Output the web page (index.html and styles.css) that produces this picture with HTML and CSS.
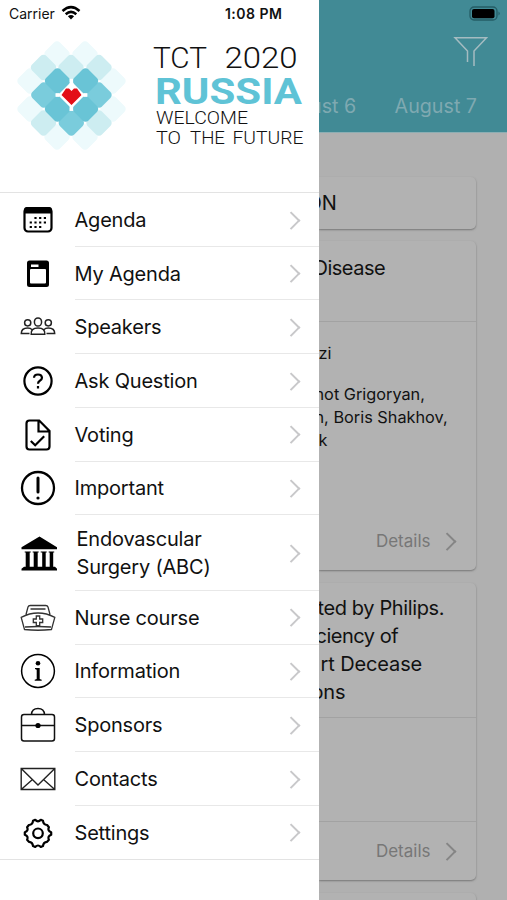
FILE: index.html
```html
<!DOCTYPE html>
<html lang="en">
<head>
<meta charset="utf-8">
<title>TCT 2020 Russia</title>
<link rel="stylesheet" href="styles.css">
</head>
<body>
<div class="app">
  <aside class="drawer">
    <div class="status"><span>Carrier</span>
      <svg class="wifi" width="20" height="16" viewBox="0 0 20 16" fill="none" stroke="#000" stroke-width="2.500"><path d="M1.500 6Q10-1.700 18.500 6M4.700 9.200Q10 4.500 15.300 9.200"/><path d="M10 14.500 6.900 11.300Q10 8.600 13.100 11.300Z" fill="#000" stroke="none"/></svg>
      <b class="clock">1:08 PM</b>
    </div>
    <svg class="logo" width="319" height="165" viewBox="0 27 319 165">
      <defs><rect id="p" x="-10.200" y="-10.200" width="20.400" height="20.400" rx="4.200" transform="rotate(45)"/></defs>
      <g fill="#edfafc"><use href="#p" x="57" y="54"/><use href="#p" x="85" y="54"/><use href="#p" x="30" y="81"/><use href="#p" x="113" y="81"/><use href="#p" x="30" y="109"/><use href="#p" x="113" y="109"/><use href="#p" x="57" y="137"/><use href="#p" x="85" y="137"/></g>
      <g fill="#cdedf1"><use href="#p" x="43.500" y="67.500"/><use href="#p" x="71" y="67.500"/><use href="#p" x="99" y="67.500"/><use href="#p" x="43.500" y="123"/><use href="#p" x="99" y="123"/></g>
      <g fill="#7accdc"><use href="#p" x="43.800" y="95"/><use href="#p" x="99" y="95"/><use href="#p" x="71.300" y="123"/></g>
      <g fill="#69c4d6"><use href="#p" x="57.500" y="81"/><use href="#p" x="85.500" y="81"/><use href="#p" x="57.500" y="109"/><use href="#p" x="85.500" y="109"/></g>
      <g fill="#fff"><rect x="69.500" y="78.800" width="3.600" height="3.600"/><rect x="55.500" y="93.200" width="3.600" height="3.600"/><rect x="83.800" y="93.200" width="3.600" height="3.600"/><rect x="69.500" y="107.300" width="3.600" height="3.600"/></g>
      <path fill="#e30f18" d="M61.500 95 66 88.500h3l2.500 2.500 2.500-2.500h3l4.500 6.500-10 10Z"/>
      <text class="l1" x="153" y="67.500" textLength="54" lengthAdjust="spacingAndGlyphs">TCT</text>
      <text class="l1" x="224.500" y="67.500" textLength="73" lengthAdjust="spacingAndGlyphs">2020</text>
      <text class="l2" x="155" y="104" textLength="147" lengthAdjust="spacingAndGlyphs">RUSSIA</text>
      <text class="l3" x="156" y="124" textLength="92" lengthAdjust="spacingAndGlyphs">WELCOME</text>
      <text class="l3" x="156" y="143.500" textLength="25" lengthAdjust="spacingAndGlyphs">TO</text>
      <text class="l3" x="190" y="143.500" textLength="35" lengthAdjust="spacingAndGlyphs">THE</text>
      <text class="l3" x="232.500" y="143.500" textLength="71" lengthAdjust="spacingAndGlyphs">FUTURE</text>
    </svg>
    <nav class="menu">
      <a class="item"><svg class="ico" viewBox="0 0 40 40"><rect x="6.500" y="8" width="27" height="23.500" rx="3.500" fill="none" stroke="#000" stroke-width="2.200"/><path d="M6 13.500V10q0-3 3-3h22q3 0 3 3v3.500Z"/><path d="M16.400 18h12M11.700 22.500h17M11.700 27h12" stroke="#000" stroke-width="2.200" stroke-dasharray="2.200 2.500"/></svg><span class="label">Agenda</span></a>
      <a class="item"><svg class="ico" viewBox="0 0 40 40"><path fill-rule="evenodd" d="M11.500 6.500h17q2.500 0 2.500 2.500v21.500q0 2.500-2.500 2.500h-17Q9 33 9 30.500V9q0-2.500 2.500-2.500Zm1.500 4V13h7.500v-2.500Zm0 4.500q-1 0-1 1v12.500q0 1 1 1h14q1 0 1-1V16q0-1-1-1Z"/></svg><span class="label">My Agenda</span></a>
      <a class="item"><svg class="ico" viewBox="0 0 40 40" fill="none" stroke="#222" stroke-width="1.500"><ellipse cx="20" cy="15" rx="3.600" ry="4.100"/><circle cx="9.700" cy="15.800" r="3.100"/><circle cx="30.300" cy="15.800" r="3.100"/><path d="M13.200 27.300q-.7-6.300 6.800-6.300t6.800 6.300ZM11.500 26.500H3.300q0-5.500 6.400-5.500 3 0 4.300 1.600M28.500 26.500h8.200q0-5.500-6.400-5.500-3 0-4.300 1.600"/></svg><span class="label">Speakers</span></a>
      <a class="item"><svg class="ico" viewBox="0 0 40 40" fill="none" stroke="#000" stroke-width="2.200"><circle cx="20" cy="20" r="13.600"/><path d="M16 16.800q.2-3.300 4-3.300t4 3.200q0 1.700-2.200 3Q20 20.700 20 22.800M20 25v2.400"/></svg><span class="label">Ask Question</span></a>
      <a class="item"><svg class="ico" viewBox="0 0 40 40" fill="none" stroke="#000" stroke-width="2.200"><path d="M11.500 5.500h9.700l10.300 10.400v15.600q0 3-3 3h-17q-3 0-3-3v-23q0-3 3-3ZM20.500 5.500v11h11M12.800 26l4.400 4.300 9-9"/></svg><span class="label">Voting</span></a>
      <a class="item"><svg class="ico" viewBox="0 0 40 40" fill="none" stroke="#000"><circle cx="20" cy="20" r="16" stroke-width="2.300"/><path d="M20 10v14" stroke-width="3" stroke-linecap="round"/><circle cx="20" cy="30" r="1.600" fill="#000" stroke="none"/></svg><span class="label">Important</span></a>
      <a class="item tall"><svg class="ico" viewBox="0 0 40 40"><path d="m21.500 3.500 17.500 10.700v2H3.500v-2ZM6.700 18.500h6v1h-1V34h-4V19.500h-1ZM14.700 18.500h6v1h-1V34h-4V19.500h-1ZM22.700 18.500h6v1h-1V34h-3.500V19.500h-1.500ZM30.700 18.500h5.500v1h-1V34h-3.500V19.500h-1ZM6 33.800h31l2 2v1.700H3.500v-1.700Z"/></svg><span class="label">Endovascular<br>Surgery (ABC)</span></a>
      <a class="item"><svg class="ico" viewBox="0 0 40 40" fill="none" stroke="#333" stroke-width="1.300"><path d="M8 16.500 10 9q.5-1.500 2.300-1.500h15.400q1.800 0 2.300 1.500l2 7.500M12.500 11h15M6.500 31.500 3.200 19.300Q11.500 15 20 15t16.800 4.300l-3.300 12.200q-13.500 1.500-27 0ZM7 29q13-1 26 0"/><path d="M18.300 18h3.400v3h3v3.500h-3v3.200h-3.400v-3.200h-3V21h3Z"/></svg><span class="label">Nurse course</span></a>
      <a class="item"><svg class="ico" viewBox="0 0 40 40"><circle cx="20" cy="20" r="16.400" fill="none" stroke="#000" stroke-width="1.500"/><circle cx="20" cy="12.300" r="2.300"/><path d="M17 17h4.700v11l2 .7v1h-7v-1l2-.7V18.800L17 18Z"/></svg><span class="label">Information</span></a>
      <a class="item"><svg class="ico" viewBox="0 0 40 40" fill="none" stroke="#111" stroke-width="1.500"><rect x="3.500" y="9.500" width="33" height="26.500" rx="2.500"/><path d="M13.500 9.500Q13.800 3.500 20 3.500t6.500 6M3.500 20.500h33"/><circle cx="20" cy="20.500" r="2.600" fill="#000" stroke="none"/></svg><span class="label">Sponsors</span></a>
      <a class="item"><svg class="ico" viewBox="0 0 40 40" fill="none" stroke="#222" stroke-width="1.400"><path d="M3.200 9.500h33.600v21H3.200ZM3.200 9.500 20 26 36.800 9.500M3.200 30.500l11.300-10M36.800 30.500l-11.300-10"/></svg><span class="label">Contacts</span></a>
      <a class="item last"><svg class="ico" viewBox="0 0 40 40" fill="none" stroke="#000" stroke-width="2.200" stroke-linejoin="round"><path d="M17.200 6.800Q20 9.800 22.800 6.800L25 7.700q.2 4 4.100 4.300l1.800 2.200q-1.700 3.500 2.300 5v2.600q-4 1.500-2.300 5l-1.800 2q-3.900.3-4.100 4.300l-2.200.9q-2.800-3-5.600 0l-2.200-.9q-.2-4-4.100-4.300l-1.800-2q1.700-3.500-2.300-5v-2.600q4-1.500 2.300-5l1.800-2.200Q14.800 11.700 15 7.700Z"/><circle cx="20" cy="20.300" r="4.800"/></svg><span class="label">Settings</span></a>
    </nav>
  </aside>
  <main class="page">
    <header class="top">
      <svg class="battery" width="32" height="16" viewBox="0 0 32 16"><rect x="1" y="1" width="27" height="13" rx="4" fill="none" stroke="#255d66" stroke-width="1.300"/><rect x="3" y="3" width="22.500" height="9.300" rx="2"/><path d="M29.500 5.500q2.500 2 0 4Z" fill="#255d66"/></svg>
      <svg class="filter" width="36" height="32" viewBox="0 0 36 32" fill="none" stroke="#a5bcc1" stroke-width="1.500"><path d="M15.500 26V15L3 1.700h31.500L22 15v15"/></svg>
      <div class="tabs"><span class="t6">ust 6</span><span class="t7">August 7</span></div>
    </header>
    <section class="card first"><h2>ON</h2></section>
    <section class="card second">
      <h2>Disease</h2>
      <div class="body"><p class="name">zi</p><p class="g1">not Grigoryan,</p><p class="g2">n, Boris Shakhov,</p><p class="g3">k</p></div>
      <div class="details"><span>Details</span></div>
    </section>
    <section class="card third">
      <h2><span class="h1">ted by Philips.</span><span class="h2">ciency of</span><span class="h3">rt Decease</span><span class="h4">ons</span></h2>
      <div class="body"></div>
      <div class="details"><span>Details</span></div>
    </section>
    <section class="card fourth"></section>
  </main>
</div>
</body>
</html>
```
FILE: styles.css
```css
* { box-sizing: border-box; }
body { margin: 0; font-family: Inter, "Liberation Sans", sans-serif; color: #111; }
.app { display: grid; grid-template-columns: 318.500px 1fr; width: 507px; height: 900px; overflow: hidden; background: #b0b0b0; }
.drawer { background: #fff; height: 900px; overflow: hidden; }
.status { display: flex; align-items: center; height: 27px; padding-left: 9px; font-size: 14px; }
.wifi { margin-left: 6px; margin-top: -2px; }
.clock { margin-left: 144px; font-size: 14px; font-weight: 600; letter-spacing: .5px; white-space: nowrap; }
.logo { display: block; font-family: Roboto, sans-serif; fill: #111; }
.l1 { font-size: 29px; font-weight: 300; }
.l2 { font-size: 37.500px; font-weight: 700; fill: #5fc3d6; }
.l3 { font-size: 18px; font-weight: 300; }
.menu { border-top: 1px solid #e3e3e3; border-bottom: 1px solid #e3e3e3; }
.item { display: grid; grid-template-columns: 74.500px 1fr 34px; align-items: center; height: 53.720px; position: relative; }
.item.tall { height: 75.500px; }
.ico { width: 40px; height: 40px; margin-left: 17.500px; }
.label { font-size: 20px; letter-spacing: -.2px; line-height: 28px; white-space: nowrap; }
.tall .label { padding-left: 2px; }
.item::before { content: ""; position: absolute; left: 75px; right: 0; bottom: 0; height: 1px; background: #e8e8e8; }
.item.last::before { display: none; }
.item::after, .details::after { content: ""; width: 10.500px; height: 10.500px; border: solid #c8c8ca; border-width: 2px 2px 0 0; transform: rotate(45deg); }
.page { overflow: hidden; height: 900px; white-space: nowrap; display: flex; flex-direction: column; }
.top { background: #418a95; height: 133px; flex: none; display: flex; flex-direction: column; align-items: flex-end; border-bottom: 1px solid #8daeb3; }
.battery { margin: 6px 6px 0 0; flex: none; }
.filter { margin: 14px 19px 0 0; flex: none; }
.tabs { display: flex; justify-content: space-between; width: 100%; margin-top: 24px; padding-right: 30px; font-size: 19.700px; line-height: 28px; color: #7fa9b1; }
.t6 { margin-left: -8.500px; }
.card { flex: none; width: 157px; background: #b2b2b2; border-radius: 0 5px 5px 0; box-shadow: 0 1px 2px #777; }
h2, p { margin: 0; font-weight: 400; }
h2 { font-size: 20px; line-height: 28px; }
.first { height: 52px; margin-top: 44px; padding-top: 12px; }
.first h2 { margin-left: -12px; }
.second { height: 329px; margin-top: 12px; }
.second h2 { height: 80px; padding-top: 13px; margin-left: -5px; letter-spacing: -.5px; }
.second .body { border-top: 1px solid #a2a2a2; height: 191px; padding-top: 20px; font-size: 16.300px; line-height: 23px; }
.name { margin-bottom: 17.500px; }
.g1 { margin-left: -4px; }
.g2 { margin-left: -4px; }
.details { display: flex; align-items: center; justify-content: flex-end; height: 58px; padding-right: 22px; font-size: 17px; color: #777; }
.details::after { border-color: #858585; margin-left: 10.500px; }
.third { height: 297px; margin-top: 13px; }
.third h2 { height: 135px; padding-top: 11px; border-bottom: 1px solid #a2a2a2; }
.third h2 span { display: block; }
.h1 { margin-left: -1px; letter-spacing: -.38px; }
.h2 { margin-left: -3px; letter-spacing: -.5px; }
.h3 { margin-left: 2px; letter-spacing: -.12px; }
.h4 { margin-left: -7px; letter-spacing: -.2px; }
.third .body { height: 104px; border-bottom: 1px solid #a2a2a2; }
.fourth { height: 20px; margin-top: 13px; }
```
